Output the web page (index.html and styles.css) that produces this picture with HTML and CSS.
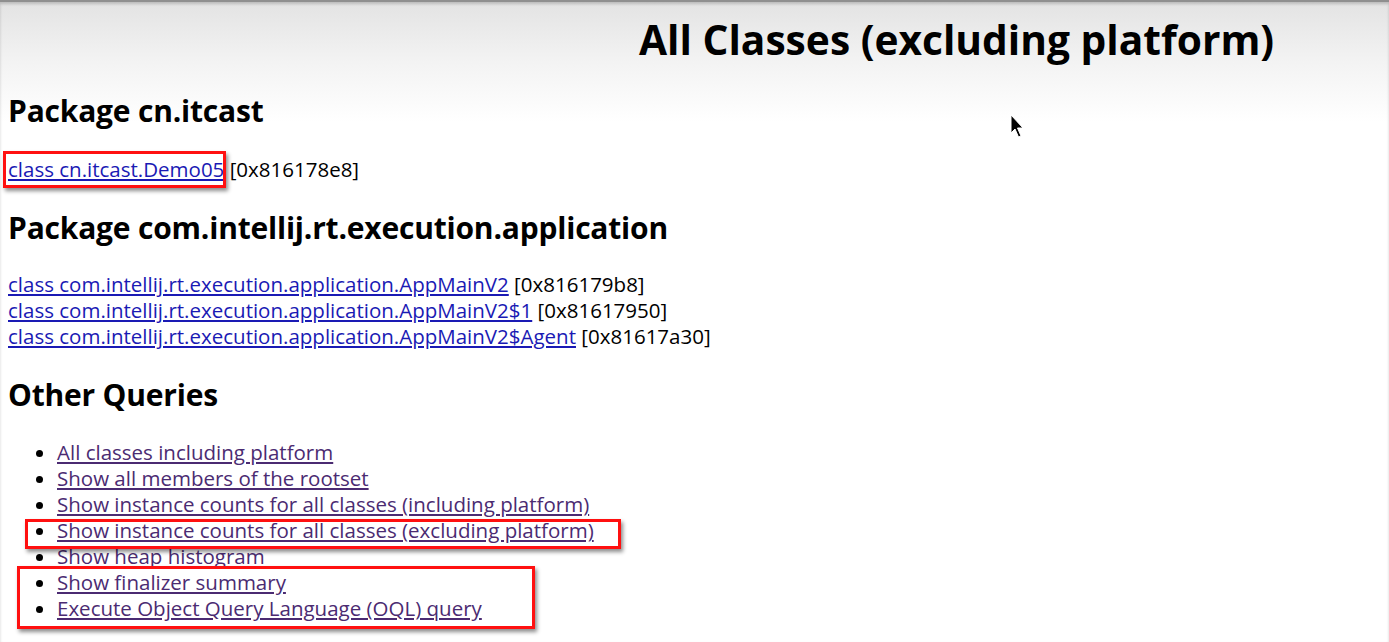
FILE: index.html
```html
<!DOCTYPE html>
<html lang="en">
<head>
<meta charset="utf-8">
<title>All Classes (excluding platform)</title>
<link rel="stylesheet" href="styles.css">
</head>
<body>
<div class="page">
  <h1 class="title">All Classes (excluding platform)</h1>

  <h2 class="pkg">Package cn.itcast</h2>
  <div class="classes first">
    <div class="row"><a class="cls" href="#">class cn.itcast.Demo05</a> [0x816178e8]</div>
  </div>

  <h2 class="pkg">Package com.intellij.rt.execution.application</h2>
  <div class="classes">
    <div class="row"><a class="cls" href="#">class com.intellij.rt.execution.application.AppMainV2</a> [0x816179b8]</div>
    <div class="row"><a class="cls" href="#">class com.intellij.rt.execution.application.AppMainV2$1</a> [0x81617950]</div>
    <div class="row"><a class="cls" href="#">class com.intellij.rt.execution.application.AppMainV2$Agent</a> [0x81617a30]</div>
  </div>

  <h2 class="pkg other">Other Queries</h2>
  <ul class="queries">
    <li><a class="q" href="#">All classes including platform</a></li>
    <li><a class="q" href="#">Show all members of the rootset</a></li>
    <li><a class="q" href="#">Show instance counts for all classes (including platform)</a></li>
    <li><a class="q" href="#">Show instance counts for all classes (excluding platform)</a></li>
    <li><a class="q" href="#">Show heap histogram</a></li>
    <li><a class="q" href="#">Show finalizer summary</a></li>
    <li><a class="q" href="#">Execute Object Query Language (OQL) query</a></li>
  </ul>

  <div class="mark mark1"></div>
  <div class="mark mark2"></div>
  <div class="mark mark3"></div>

  <svg class="cursor" width="14" height="24" viewBox="0 0 14 24">
    <path d="M1 1 L1 19 L5 15 L8.5 23 L11 22 L7.5 14 L13 14 Z" fill="#000" stroke="#fff" stroke-width="1"/>
  </svg>
</div>
</body>
</html>
```
FILE: styles.css
```css
html, body {
  margin: 0;
  padding: 0;
  background: #ffffff;
}

.page {
  position: relative;
  height: 642px;
  box-sizing: border-box;
  border-top: 2px solid #8f8f8f;
  box-shadow: inset 0 2px 3px rgba(0,0,0,0.18);
  background: linear-gradient(to bottom, #e3e3e3 0px, #f3f3f3 60px, #ffffff 120px, #ffffff 100%);
  font-family: "Open Sans", "Noto Sans", sans-serif;
  color: #000;
  overflow: hidden;
}

.title {
  margin: 0;
  padding: 13px 0 0 639px;
  font-size: 40.7px;
  line-height: 48px;
  font-weight: 700;
  white-space: nowrap;
}

.pkg {
  margin: 0;
  padding-left: 8px;
  font-size: 30px;
  line-height: 36px;
  font-weight: 700;
  letter-spacing: -0.2px;
  white-space: nowrap;
}

.title + .pkg { margin-top: 30px; }
.classes + .pkg { margin-top: 28px; }

.classes {
  padding-left: 8px;
  margin-top: 27px;
  font-size: 20.5px;
  line-height: 26px;
}
.classes:not(.first) { margin-top: 25px; }

.row { white-space: nowrap; }

.cls {
  color: #1a1ab4;
  text-decoration: underline;
}

.queries {
  margin: 26px 0 0 0;
  padding-left: 57px;
  font-size: 20.5px;
  line-height: 26px;
}

.q {
  color: #4b2b72;
  text-decoration: underline;
}

.mark {
  position: absolute;
  border: 3px solid #ff1010;
  box-shadow: 2px 3px 4px rgba(0,0,0,0.45);
  box-sizing: border-box;
}
.mark1 { left: 3px; top: 149px; width: 223px; height: 37px; }
.mark2 { left: 25px; top: 517px; width: 596px; height: 30px; }
.mark3 { left: 17px; top: 564px; width: 518px; height: 63px; }

.cursor {
  position: absolute;
  left: 1010px;
  top: 112px;
}
```
